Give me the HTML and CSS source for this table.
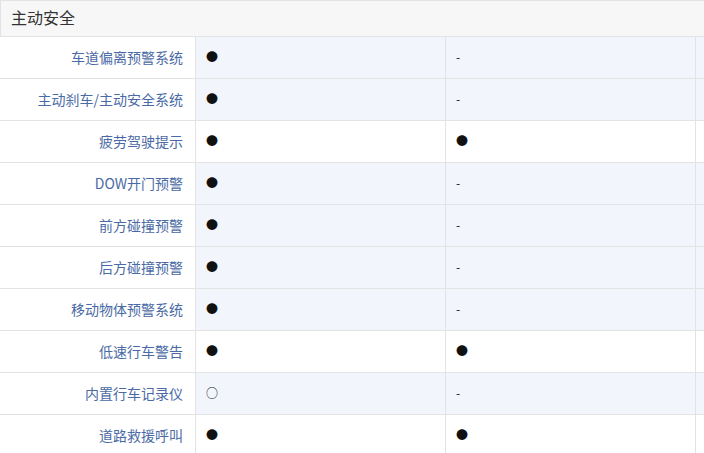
FILE: index.html
```html
<!DOCTYPE html>
<html lang="zh-CN">
<head>
<meta charset="utf-8">
<title>主动安全</title>
<link rel="stylesheet" href="styles.css">
</head>
<body>
<div class="table">
  <div class="group-head">主动安全</div>
  <div class="row diff"><div class="label">车道偏离预警系统</div><div class="cell">●</div><div class="cell">-</div><div class="cell more"></div></div>
  <div class="row diff"><div class="label">主动刹车/主动安全系统</div><div class="cell">●</div><div class="cell">-</div><div class="cell more"></div></div>
  <div class="row"><div class="label">疲劳驾驶提示</div><div class="cell">●</div><div class="cell">●</div><div class="cell more"></div></div>
  <div class="row diff"><div class="label">DOW开门预警</div><div class="cell">●</div><div class="cell">-</div><div class="cell more"></div></div>
  <div class="row diff"><div class="label">前方碰撞预警</div><div class="cell">●</div><div class="cell">-</div><div class="cell more"></div></div>
  <div class="row diff"><div class="label">后方碰撞预警</div><div class="cell">●</div><div class="cell">-</div><div class="cell more"></div></div>
  <div class="row diff"><div class="label">移动物体预警系统</div><div class="cell">●</div><div class="cell">-</div><div class="cell more"></div></div>
  <div class="row"><div class="label">低速行车警告</div><div class="cell">●</div><div class="cell">●</div><div class="cell more"></div></div>
  <div class="row diff"><div class="label">内置行车记录仪</div><div class="cell">○</div><div class="cell">-</div><div class="cell more"></div></div>
  <div class="row"><div class="label">道路救援呼叫</div><div class="cell">●</div><div class="cell">●</div><div class="cell more"></div></div>
</div>
</body>
</html>
```

FILE: styles.css
```css
html, body {
  margin: 0;
  padding: 0;
  overflow: hidden;
  background: #fff;
}
body {
  font-family: "Microsoft YaHei", "Noto Sans CJK SC", "Noto Sans", sans-serif;
  color: #222;
}
.table {
  width: 704px;
}
.group-head {
  box-sizing: border-box;
  height: 37px;
  border-top: 1px solid #e3e3e3;
  border-bottom: 1px solid #e3e3e3;
  border-left: 1px solid #e3e3e3;
  background: #f7f7f7;
  padding-left: 10px;
  padding-bottom: 2px;
  font-size: 16px;
  line-height: 33px;
  color: #333;
}
.row {
  display: grid;
  grid-template-columns: 196px 250px 250px 1fr;
  height: 42px;
}
.label, .cell {
  box-sizing: border-box;
  border-right: 1px solid #e3e3e3;
  border-bottom: 1px solid #e3e3e3;
  display: flex;
  align-items: center;
  padding-bottom: 2px;
  font-size: 14px;
}
.label {
  justify-content: flex-end;
  padding-right: 12px;
  color: #4a6aa5;
  background: #fff;
}
.cell {
  padding-left: 10px;
  padding-bottom: 3px;
  color: #111;
  font-size: 12px;
}
.cell.more {
  border-right: none;
}
.row.diff .cell {
  background: #f2f5fc;
}
```
